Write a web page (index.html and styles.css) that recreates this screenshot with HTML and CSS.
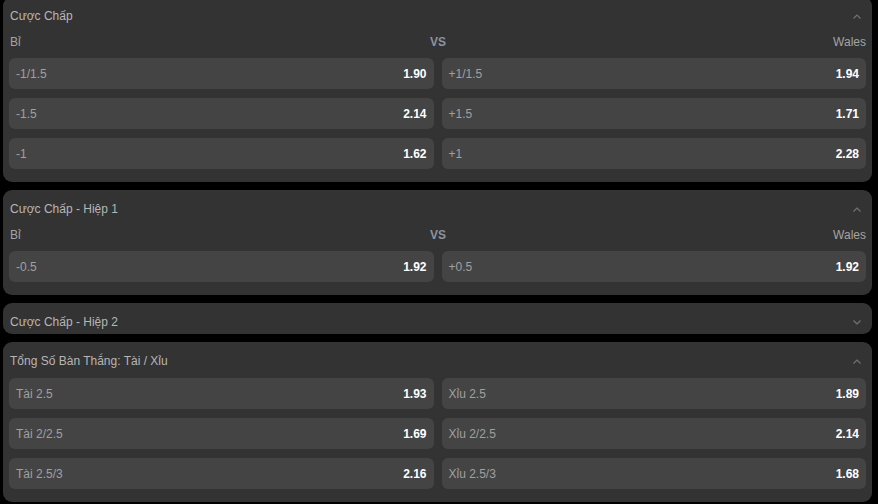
FILE: index.html
```html
<!DOCTYPE html>
<html lang="vi">
<head>
  <meta charset="UTF-8">
  <meta name="viewport" content="width=device-width, initial-scale=1.0">
  <title>Kèo trận đấu</title>
  <link rel="stylesheet" href="styles.css">
</head>
<body>
  <div class="markets">

    <!-- Cược Chấp -->
    <section class="market market-first">
      <div class="market-head">
        <span class="market-title">Cược Chấp</span>
        <svg class="chevron" width="8" height="5" viewBox="0 0 8 5"><path d="M0.5 4.5 L4 1 L7.5 4.5" fill="none" stroke="currentColor" stroke-width="1.2"/></svg>
      </div>
      <div class="market-body">
        <div class="teams">
          <span class="team-home">Bỉ</span>
          <span class="vs">VS</span>
          <span class="team-away">Wales</span>
        </div>
        <div class="odds-grid">
          <div class="odd"><span class="odd-label">-1/1.5</span><span class="odd-value">1.90</span></div>
          <div class="odd"><span class="odd-label">+1/1.5</span><span class="odd-value">1.94</span></div>
          <div class="odd"><span class="odd-label">-1.5</span><span class="odd-value">2.14</span></div>
          <div class="odd"><span class="odd-label">+1.5</span><span class="odd-value">1.71</span></div>
          <div class="odd"><span class="odd-label">-1</span><span class="odd-value">1.62</span></div>
          <div class="odd"><span class="odd-label">+1</span><span class="odd-value">2.28</span></div>
        </div>
      </div>
    </section>

    <!-- Cược Chấp - Hiệp 1 -->
    <section class="market">
      <div class="market-head">
        <span class="market-title">Cược Chấp - Hiệp 1</span>
        <svg class="chevron" width="8" height="5" viewBox="0 0 8 5"><path d="M0.5 4.5 L4 1 L7.5 4.5" fill="none" stroke="currentColor" stroke-width="1.2"/></svg>
      </div>
      <div class="market-body">
        <div class="teams">
          <span class="team-home">Bỉ</span>
          <span class="vs">VS</span>
          <span class="team-away">Wales</span>
        </div>
        <div class="odds-grid">
          <div class="odd"><span class="odd-label">-0.5</span><span class="odd-value">1.92</span></div>
          <div class="odd"><span class="odd-label">+0.5</span><span class="odd-value">1.92</span></div>
        </div>
      </div>
    </section>

    <!-- Cược Chấp - Hiệp 2 (collapsed) -->
    <section class="market collapsed">
      <div class="market-head">
        <span class="market-title">Cược Chấp - Hiệp 2</span>
        <svg class="chevron" width="8" height="5" viewBox="0 0 8 5"><path d="M0.5 0.5 L4 4 L7.5 0.5" fill="none" stroke="currentColor" stroke-width="1.2"/></svg>
      </div>
    </section>

    <!-- Tổng Số Bàn Thắng -->
    <section class="market">
      <div class="market-head">
        <span class="market-title">Tổng Số Bàn Thắng: Tài / Xỉu</span>
        <svg class="chevron" width="8" height="5" viewBox="0 0 8 5"><path d="M0.5 4.5 L4 1 L7.5 4.5" fill="none" stroke="currentColor" stroke-width="1.2"/></svg>
      </div>
      <div class="market-body">
        <div class="odds-grid">
          <div class="odd"><span class="odd-label">Tài 2.5</span><span class="odd-value">1.93</span></div>
          <div class="odd"><span class="odd-label">Xỉu 2.5</span><span class="odd-value">1.89</span></div>
          <div class="odd"><span class="odd-label">Tài 2/2.5</span><span class="odd-value">1.69</span></div>
          <div class="odd"><span class="odd-label">Xỉu 2/2.5</span><span class="odd-value">2.14</span></div>
          <div class="odd"><span class="odd-label">Tài 2.5/3</span><span class="odd-value">2.16</span></div>
          <div class="odd"><span class="odd-label">Xỉu 2.5/3</span><span class="odd-value">1.68</span></div>
        </div>
      </div>
    </section>

  </div>
</body>
</html>
```

FILE: styles.css
```css
/* General */
body {
  margin: 0;
  background: #000;
  font-family: "Liberation Sans", Arial, sans-serif;
  font-size: 12px;
  line-height: 14px;
  color: #aaa;
  overflow: hidden;
}

.markets {
  display: flex;
  flex-direction: column;
  gap: 8px;
  padding: 0 6px 0 3px;
}

/* Market panel */
.market {
  background: #333;
  border-radius: 9px;
}

.market-first {
  margin-top: -3px;
}

.market-head {
  display: flex;
  align-items: center;
  justify-content: space-between;
  padding: 12px 11px 7px 7px;
}

.collapsed .market-head {
  padding-bottom: 5px;
}

.market-title {
  color: #b6b6b6;
}

.chevron {
  color: #737373;
  display: block;
}

.market-body {
  padding: 3px 6px 13px 6px;
}

/* Teams row */
.teams {
  display: grid;
  grid-template-columns: 1fr auto 1fr;
  align-items: center;
  padding: 2px 0 9px 1px;
  color: #a4a4a4;
}

.team-away {
  text-align: right;
}

.vs {
  font-weight: bold;
  color: #8a94a1;
}

/* Odds */
.odds-grid {
  display: grid;
  grid-template-columns: 1fr 1fr;
  gap: 9px 8px;
}

.odd {
  display: flex;
  align-items: center;
  justify-content: space-between;
  height: 31px;
  padding: 0 7px;
  background: #444;
  border-radius: 6px;
}

.odd-label {
  color: #a0a0a0;
}

.odd-value {
  color: #fff;
  font-weight: bold;
}
```
